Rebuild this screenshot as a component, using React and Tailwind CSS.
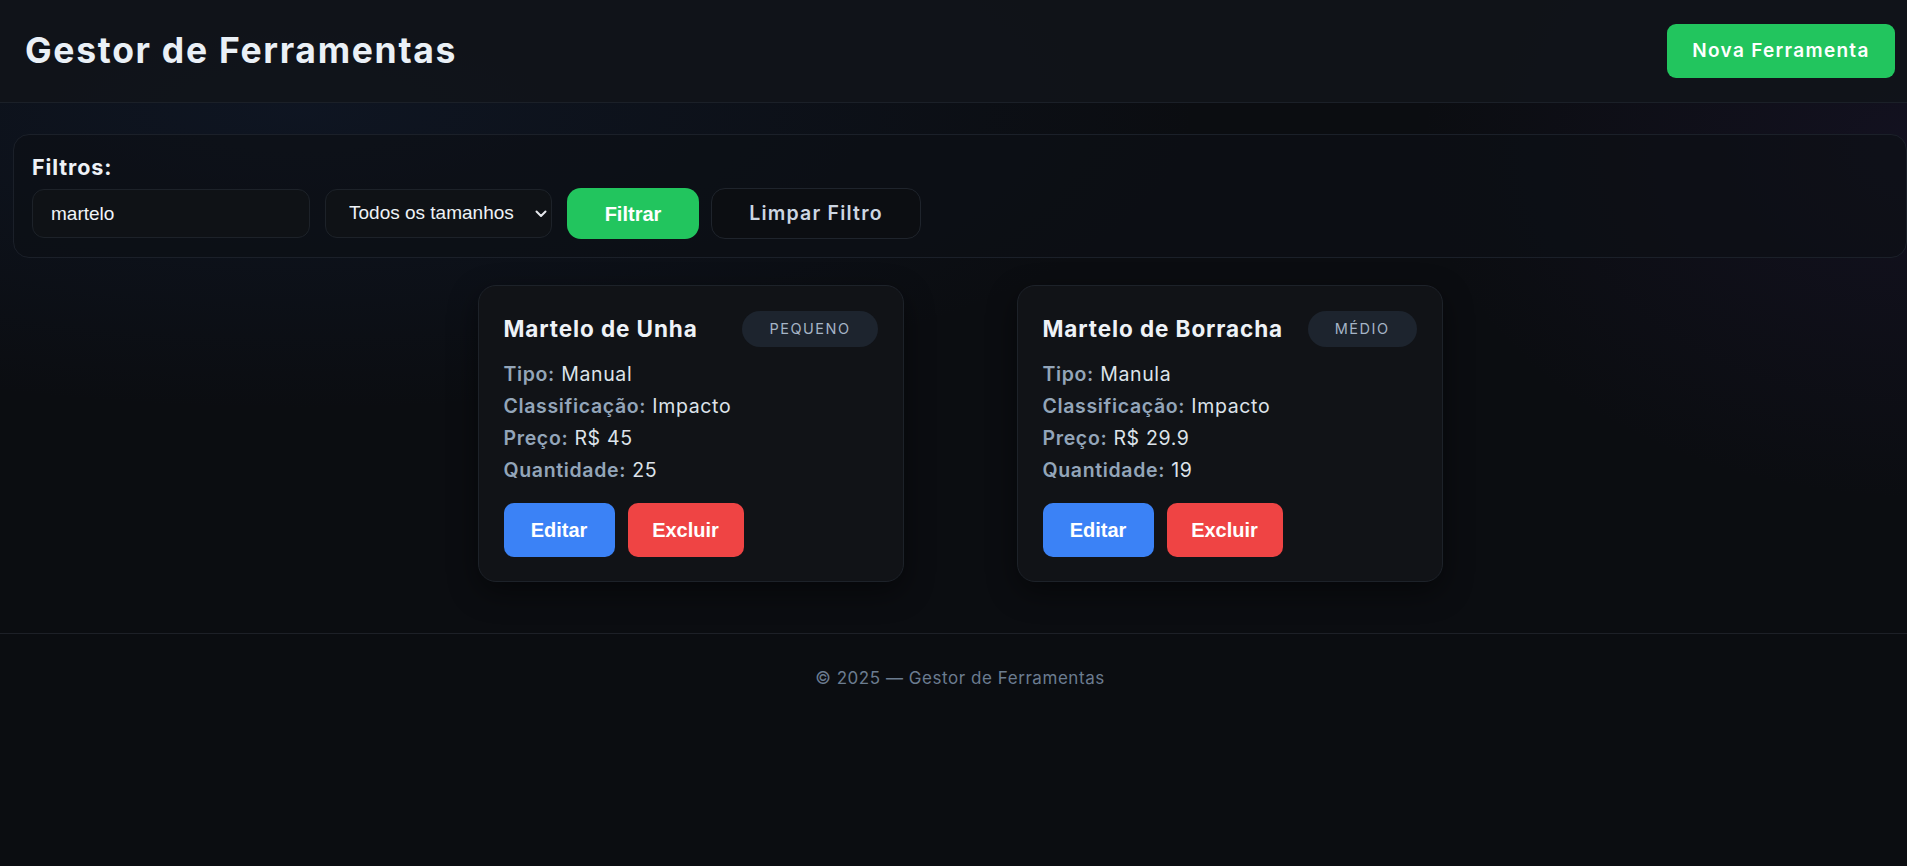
const tools = [
  {
    nome: "Martelo de Unha",
    tamanho: "Pequeno",
    tipo: "Manual",
    classificacao: "Impacto",
    preco: "45",
    quantidade: 25,
  },
  {
    nome: "Martelo de Borracha",
    tamanho: "Médio",
    tipo: "Manula",
    classificacao: "Impacto",
    preco: "29.9",
    quantidade: 19,
  },
];

function ToolCard({ tool }) {
  return (
    <div className="w-[426px] rounded-[18px] border border-[#1d2229] bg-[#111317] px-[25px] pt-[25px] pb-[24px] shadow-[0_10px_30px_rgba(0,0,0,0.45)]">

      {/* Header */}
      <div className="flex items-center justify-between h-[36px]">
        <h3 className="text-[22.5px] font-bold text-[#eef2f7] tracking-[0.9px]">
          {tool.nome}
        </h3>
        <span className="h-[36px] px-[27px] flex items-center rounded-full bg-[#1d242e] text-[14.5px] uppercase text-[#a5b4c6] tracking-[1.5px]">
          {tool.tamanho}
        </span>
      </div>

      {/* Info */}
      <div className="mt-[11px] text-[19.5px] leading-[32px] text-[#dde3ea] tracking-[0.65px]">
        <p><span className="font-semibold text-[#93a5b9]">Tipo:</span> {tool.tipo}</p>
        <p><span className="font-semibold text-[#93a5b9]">Classificação:</span> {tool.classificacao}</p>
        <p><span className="font-semibold text-[#93a5b9]">Preço:</span> R$ {tool.preco}</p>
        <p><span className="font-semibold text-[#93a5b9]">Quantidade:</span> {tool.quantidade}</p>
      </div>

      {/* Actions */}
      <div className="mt-[17px] flex gap-[13px] font-['Liberation_Sans',Arial,sans-serif]">
        <button className="w-[111px] h-[54px] rounded-[10px] bg-[#3b82f6] text-white text-[20px] font-bold">
          Editar
        </button>
        <button className="w-[116px] h-[54px] rounded-[10px] bg-[#ef4444] text-white text-[20px] font-bold">
          Excluir
        </button>
      </div>

    </div>
  );
}

export default function App() {
  return (
    <div className="w-full min-h-screen overflow-hidden bg-[#0b0d11]">
      <div className="w-[1920px] min-h-[866px] font-['Inter',sans-serif] bg-[radial-gradient(ellipse_900px_300px_at_300px_110px,rgba(30,58,110,0.18),transparent),radial-gradient(ellipse_500px_350px_at_1920px_150px,rgba(60,40,110,0.16),transparent)]">

        {/* Header */}
        <header className="h-[103px] flex items-center justify-between pl-[25px] pr-[25px] border-b border-[#1b2028] bg-[#111419]/90">
          <h1 className="text-[35.5px] font-bold text-[#eaf0f6] tracking-[1.7px]">
            Gestor de Ferramentas
          </h1>
          <button className="w-[228px] h-[54px] rounded-[9px] bg-[#22c55e] text-white text-[19px] font-semibold tracking-[1.3px]">
            Nova Ferramenta
          </button>
        </header>

        <main className="px-[13px] pt-[31px]">

          {/* Filtros */}
          <div className="rounded-[16px] border border-[#1b2029] bg-[#0d1016]/70 px-[18px] pt-[18px] pb-[18px]">
            <h2 className="text-[21.5px] leading-[28px] font-bold text-[#eef2f7] tracking-[0.9px]">Filtros:</h2>
            <div className="mt-[7px] flex items-center font-['Liberation_Sans',Arial,sans-serif]">
              <input
                defaultValue="martelo"
                className="w-[278px] h-[49px] rounded-[12px] border border-[#1d2229] bg-[#0f1216] pl-[18px] text-[19px] text-[#f1f5f9] outline-none"
              />
              <div className="relative ml-[15px]">
                <select className="appearance-none w-[227px] h-[49px] rounded-[12px] border border-[#1d2229] bg-[#0f1216] pl-[23px] text-[19px] text-[#eef2f7] outline-none">
                  <option>Todos os tamanhos</option>
                  <option>Pequeno</option>
                  <option>Médio</option>
                  <option>Grande</option>
                </select>
                <svg className="absolute right-[5px] top-[21px] pointer-events-none" width="12" height="8" viewBox="0 0 12 8" fill="none">
                  <path d="M1.5 1.5L6 6L10.5 1.5" stroke="#e5e7eb" strokeWidth="2" strokeLinecap="round" strokeLinejoin="round" />
                </svg>
              </div>
              <button className="ml-[15px] w-[132px] h-[51px] rounded-[14px] bg-[#22c55e] text-white text-[20px] font-bold">
                Filtrar
              </button>
              <button className="ml-[12px] w-[210px] h-[51px] rounded-[14px] border border-[#1f242c] bg-[#0c0e12] text-[#cdd6e2] text-[19.5px] font-semibold font-['Inter',sans-serif] tracking-[1.2px]">
                Limpar Filtro
              </button>
            </div>
          </div>

          {/* Lista */}
          <div className="mt-[27px] flex justify-center gap-[113px]">
            {tools.map((t) => (
              <ToolCard key={t.nome} tool={t} />
            ))}
          </div>

        </main>

        {/* Footer */}
        <footer className="mt-[51px] border-t border-[#1d2027] pt-[32px] pb-[40px] text-center text-[17px] text-[#6b7c90] tracking-[0.55px]">
          © 2025 — Gestor de Ferramentas
        </footer>

      </div>
    </div>
  );
}
